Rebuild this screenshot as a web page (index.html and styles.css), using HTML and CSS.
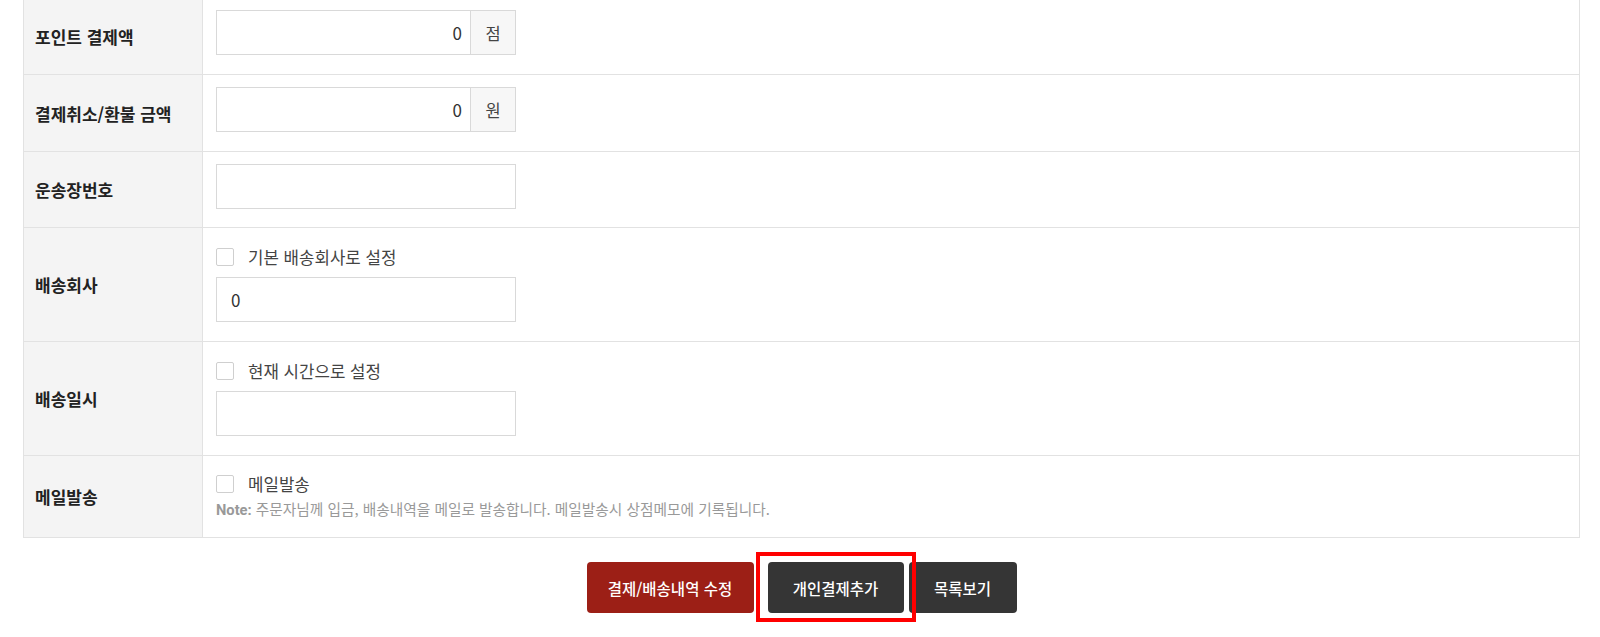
FILE: index.html
```html
<!DOCTYPE html>
<html lang="ko">
<head>
<meta charset="utf-8">
<title>결제/배송</title>
<link rel="stylesheet" href="styles.css">
</head>
<body>
<div class="wrap">
  <table class="form">
    <colgroup><col class="c-label"><col></colgroup>
    <tr>
      <th>포인트 결제액</th>
      <td><div class="unit-input"><input class="inp num" type="text" value="0"><span class="unit">점</span></div></td>
    </tr>
    <tr>
      <th>결제취소/환불 금액</th>
      <td><div class="unit-input"><input class="inp num" type="text" value="0"><span class="unit">원</span></div></td>
    </tr>
    <tr>
      <th>운송장번호</th>
      <td class="tight"><input class="inp" type="text" value=""></td>
    </tr>
    <tr>
      <th>배송회사</th>
      <td>
        <div class="chkline"><span class="chk"></span><span class="chk-text">기본 배송회사로 설정</span></div>
        <input class="inp" type="text" value="0">
      </td>
    </tr>
    <tr>
      <th>배송일시</th>
      <td>
        <div class="chkline"><span class="chk"></span><span class="chk-text">현재 시간으로 설정</span></div>
        <input class="inp" type="text" value="">
      </td>
    </tr>
    <tr>
      <th>메일발송</th>
      <td class="last">
        <div class="chkline short"><span class="chk"></span><span class="chk-text">메일발송</span></div>
        <p class="note"><b>Note:</b> 주문자님께 입금, 배송내역을 메일로 발송합니다. 메일발송시 상점메모에 기록됩니다.</p>
      </td>
    </tr>
  </table>
  <div class="btns">
    <a class="btn btn-red">결제/배송내역 수정</a>
    <span class="hl"><a class="btn btn-dark btn-add">개인결제추가</a><span class="hl-frame"></span></span>
    <a class="btn btn-dark btn-list">목록보기</a>
  </div>
</div>
</body>
</html>
```
FILE: styles.css
```css
html, body {
  margin: 0;
  padding: 0;
  background: #fff;
  font-family: "Noto Sans CJK KR", "Noto Sans", sans-serif;
}

.wrap {
  padding: 0 20px 40px 23px;
  margin-top: -3px;
}

.form {
  width: 100%;
  table-layout: fixed;
  border-collapse: collapse;
  border: 1px solid #e2e2e2;
}

.c-label {
  width: 179px;
}

.form th,
.form td {
  border: 1px solid #e2e2e2;
}

.form th {
  background: #f4f4f4;
  text-align: left;
  vertical-align: middle;
  padding: 0 11px;
  font-size: 17px;
  font-weight: 700;
  color: #222;
}

.form td {
  padding: 12px 13px 19px;
  vertical-align: top;
}

.form td.tight {
  padding-bottom: 18px;
}

.form td.last {
  padding-bottom: 18px;
}

.inp {
  display: block;
  box-sizing: border-box;
  width: 300px;
  height: 45px;
  margin: 0;
  border: 1px solid #d9d9d9;
  border-radius: 0;
  padding: 0 14px;
  font-family: "Noto Sans CJK KR", "Noto Sans", sans-serif;
  font-size: 17px;
  color: #333;
  background: #fff;
  outline: none;
}

.unit-input {
  display: flex;
  width: 300px;
  height: 45px;
}

.unit-input .inp {
  flex: 1;
  width: auto;
  text-align: right;
  padding-right: 8px;
}

.unit {
  box-sizing: border-box;
  width: 45px;
  height: 45px;
  border: 1px solid #d9d9d9;
  border-left: none;
  background: #f7f7f7;
  display: flex;
  align-items: center;
  justify-content: center;
  font-size: 16.5px;
  color: #444;
}

.chkline {
  display: flex;
  align-items: center;
  height: 33px;
  margin-bottom: 4px;
}

.chkline.short {
  height: 31px;
  margin-bottom: 0;
}

.chk {
  box-sizing: border-box;
  width: 18px;
  height: 18px;
  border: 1px solid #cfcfcf;
  border-radius: 2px;
  background: #fff;
  flex: none;
}

.chk-text {
  margin-left: 14px;
  font-size: 16.8px;
  color: #444;
}

.note {
  margin: 0;
  height: 20px;
  line-height: 20px;
  font-size: 14.7px;
  color: #999;
}

.note b {
  font-family: Roboto, "Noto Sans CJK KR", sans-serif;
  font-weight: 700;
}

.btns {
  display: flex;
  justify-content: center;
  margin-top: 24px;
}

.btn {
  box-sizing: border-box;
  height: 51px;
  display: flex;
  align-items: center;
  justify-content: center;
  border-radius: 4px;
  color: #fff;
  font-size: 15.5px;
  font-weight: 500;
  text-decoration: none;
  white-space: nowrap;
}

.btn-red {
  width: 167px;
  background: #9c1f16;
}

.btn-dark {
  background: #353535;
}

.hl {
  position: relative;
  margin-left: 14px;
  display: block;
  width: 136px;
  height: 51px;
}

.hl-frame {
  position: absolute;
  left: -12px;
  top: -10px;
  width: 160px;
  height: 70px;
  box-sizing: border-box;
  border: 4px solid #ff0000;
  z-index: 2;
  pointer-events: none;
}

.btn-add {
  width: 136px;
}

.btn-list {
  width: 108px;
  margin-left: 5px;
}
```
